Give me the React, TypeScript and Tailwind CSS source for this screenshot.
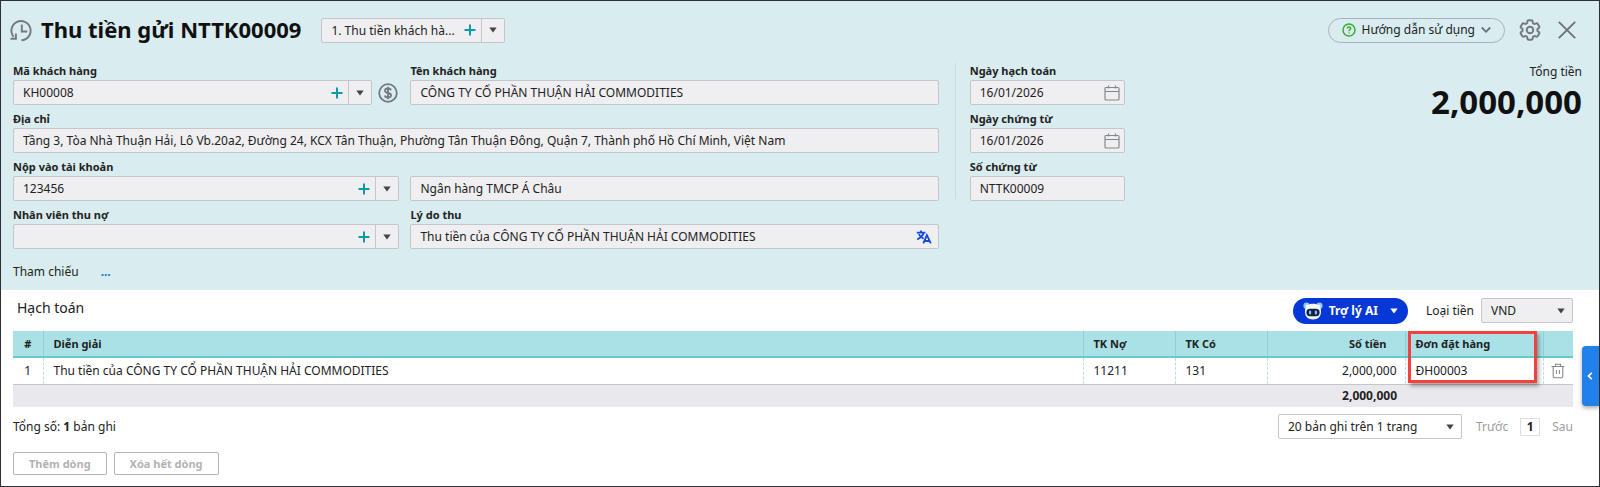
import { useState } from 'react';
import type { ReactNode } from 'react';
import { HiOutlineCog6Tooth } from 'react-icons/hi2';

type FieldProps = {
  id: string;
  label?: string;
  value: string;
  className?: string;
  children?: ReactNode;
};

const CUSTOMER = 'CÔNG TY CỔ PHẦN THUẬN HẢI COMMODITIES';

function Caret({ className = 'text-[#444]' }: { className?: string }) {
  return (
    <svg viewBox="0 0 8 6" className={`w-2 h-1.5 shrink-0 ${className}`} fill="currentColor" aria-hidden="true">
      <path d="M.3.5h7.4L4 5.6z" />
    </svg>
  );
}

function Plus() {
  return (
    <svg viewBox="0 0 12 12" className="w-3 h-3" stroke="#0e9aa8" strokeWidth="2" aria-hidden="true">
      <path d="M6 .5v11M.5 6h11" />
    </svg>
  );
}

function CalendarIcon() {
  return (
    <svg viewBox="0 0 16 16" className="w-4 h-4" fill="none" stroke="#84888e" strokeWidth="1.2" aria-hidden="true">
      <rect x="1" y="2.5" width="14" height="12.5" rx="1" />
      <path d="M1 6.5h14M4.5.5v3M11.5.5v3" />
    </svg>
  );
}

function TranslateIcon() {
  return (
    <svg viewBox="0 0 16 14" className="w-4 h-3.5" fill="none" stroke="#1447e0" strokeWidth="1.8" aria-hidden="true">
      <path d="M.8 2.6h8.600M5 .6v2M7.600 2.800C7 5.600 4.400 8 1.200 9.500M2.800 4.200C3.800 6.200 5.400 7.800 7.600 8.800" />
      <path d="M7.300 13.400l3.600-8.200 3.900 8.200M8.700 11h4.600" />
    </svg>
  );
}

function Field({ id, label, value, className = '', children }: FieldProps) {
  return (
    <div className={`flex flex-col justify-end h-[42px] ${className}`}>
      {label && <label htmlFor={id} className="text-[11px] leading-4 font-bold">{label}</label>}
      <div className="flex items-center h-[25px] mt-px rounded-[2px] border border-[#c3c6cd] bg-[#efeff1]">
        <input id={id} aria-label={label ? undefined : 'Ngân hàng'} defaultValue={value} className="flex-1 min-w-0 h-full pl-[9px] outline-none bg-transparent" />
        {children}
      </div>
    </div>
  );
}

function ComboButtons({ name }: { name: string }) {
  return (
    <>
      <button aria-label={`Thêm ${name}`} className="w-[23px] h-full flex items-center justify-center"><Plus /></button>
      <button aria-label={`Chọn ${name}`} className="w-[23px] h-full flex items-center justify-center border-l border-[#c3c6cd]"><Caret /></button>
    </>
  );
}

function DateButton({ name }: { name: string }) {
  return (
    <button aria-label={`Chọn ${name}`} className="h-full px-1 flex items-center"><CalendarIcon /></button>
  );
}

function RobotIcon() {
  return (
    <svg viewBox="0 0 20 18" className="w-5 h-[18px]" aria-hidden="true">
      <circle cx="3.6" cy="3.8" r="3.2" fill="#8cc8ff" />
      <circle cx="16.4" cy="3.8" r="3.2" fill="#8cc8ff" />
      <circle cx="3.8" cy="4" r="1.5" fill="#eaf5ff" />
      <circle cx="16.2" cy="4" r="1.5" fill="#eaf5ff" />
      <path d="M10 1.8c5 0 8 2.6 8 7.6 0 5.200-3 8-8 8s-8-2.800-8-8c0-5 3-7.600 8-7.600z" fill="#f3f8ff" />
      <rect x="3.4" y="6.8" width="13.2" height="7.4" rx="3.7" fill="#14213f" />
      <rect x="6" y="8.5" width="2.2" height="4" rx="1.1" fill="#7fc4ff" />
      <rect x="11.8" y="8.5" width="2.2" height="4" rx="1.1" fill="#7fc4ff" />
    </svg>
  );
}

function TopBar() {
  return (
    <div className="flex items-center h-[58px] pl-2 pr-[22px]">
      <button aria-label="Lịch sử" className="mr-2">
        <svg viewBox="0 0 24 24" className="w-6 h-6" fill="none" stroke="#75797f" strokeWidth="1.9">
          <path d="M12.5 22.3A9.6 9.6 0 1 0 4.6 18.8" />
          <path d="M12.8 6.5v7h5.5" />
          <path d="M1.5 20.8h5.4v-5.4" />
        </svg>
      </button>
      <h1 className="pb-0.5 text-[22px] leading-8 font-bold text-[#111]">Thu tiền gửi NTTK00009</h1>
      <div className="ml-5 flex items-center w-[184px] h-[25px] rounded-[2px] border border-[#c3c6cd] bg-[#efeff1]">
        <input aria-label="Loại thu tiền" defaultValue="1. Thu tiền khách hà..." className="flex-1 min-w-0 h-full pl-[9px] outline-none bg-transparent" />
        <ComboButtons name="loại thu tiền" />
      </div>
      <div className="ml-auto flex items-center">
        <button className="flex items-center h-[25px] px-[13px] rounded-full border border-[#a9b2ba]">
          <svg viewBox="0 0 14 14" className="w-3.5 h-3.5 mr-1.5" fill="none" stroke="#3bab36" strokeWidth="1.5" aria-hidden="true">
            <circle cx="7" cy="7" r="6" />
            <path d="M5.3 5.6C5.3 3.4 8.7 3.5 8.7 5.5 8.7 6.8 7 6.8 7 8.3M7 9.4v1.200" />
          </svg>
          Hướng dẫn sử dụng
          <svg viewBox="0 0 10 8" className="w-2.5 h-2 ml-1.5" fill="none" stroke="#6b7076" strokeWidth="1.8" aria-hidden="true">
            <path d="M.8 1.5L5 5.8l4.200-4.300" />
          </svg>
        </button>
        <button aria-label="Thiết lập" className="ml-3"><HiOutlineCog6Tooth size={26} color="#75797f" strokeWidth={1.8} /></button>
        <button aria-label="Đóng" className="ml-3.5">
          <svg viewBox="0 0 20 20" className="w-5 h-5" stroke="#6b7076" strokeWidth="1.8">
            <path d="M1.8 1.8l16.400 16.400M18.200 1.800L1.800 18.200" />
          </svg>
        </button>
      </div>
    </div>
  );
}

function VoucherForm() {
  return (
    <div className="flex pl-3 pr-[17px] pt-1">
      <div className="w-[59%] grid grid-cols-[387fr_529fr] gap-x-[11px] gap-y-1.5">
        <div className="flex items-end gap-1.5">
          <Field id="customer-code" label="Mã khách hàng" value="KH00008" className="flex-1">
            <ComboButtons name="khách hàng" />
          </Field>
          <button aria-label="Công nợ" className="mb-0.5 mr-px">
            <svg viewBox="0 0 20 20" className="w-5 h-5" fill="none" stroke="#75797f" strokeWidth="1.8">
              <circle cx="10" cy="10" r="8.8" />
              <path d="M13 7.3c-.3-1.200-1.500-1.800-3-1.800-1.700 0-3 .8-3 2.200 0 3.200 6.100 1.400 6.100 4.600 0 1.400-1.400 2.200-3.100 2.200-1.600 0-2.900-.7-3.100-2M10 3.800v12.400" />
            </svg>
          </button>
        </div>
        <Field id="customer-name" label="Tên khách hàng" value={CUSTOMER} />
        <Field id="address" label="Địa chỉ" className="col-span-2" value="Tầng 3, Tòa Nhà Thuận Hải, Lô Vb.20a2, Đường 24, KCX Tân Thuận, Phường Tân Thuận Đông, Quận 7, Thành phố Hồ Chí Minh, Việt Nam" />
        <Field id="account" label="Nộp vào tài khoản" value="123456">
          <ComboButtons name="tài khoản" />
        </Field>
        <Field id="bank" value="Ngân hàng TMCP Á Châu" />
        <Field id="staff" label="Nhân viên thu nợ" value="">
          <ComboButtons name="nhân viên" />
        </Field>
        <Field id="reason" label="Lý do thu" value={`Thu tiền của ${CUSTOMER}`}>
          <button aria-label="Dịch" className="px-1.5"><TranslateIcon /></button>
        </Field>
      </div>
      <div className="ml-4 h-[136px] w-px bg-[#c9dcdf]" />
      <div className="ml-3.5 w-[155px] shrink-0 flex flex-col gap-1.5">
        <Field id="posting-date" label="Ngày hạch toán" value="16/01/2026">
          <DateButton name="ngày hạch toán" />
        </Field>
        <Field id="voucher-date" label="Ngày chứng từ" value="16/01/2026">
          <DateButton name="ngày chứng từ" />
        </Field>
        <Field id="voucher-no" label="Số chứng từ" value="NTTK00009" />
      </div>
      <div className="ml-auto text-right">
        <div className="leading-[18px]">Tổng tiền</div>
        <div className="text-[33px] leading-[42px] font-bold text-[#111]">2,000,000</div>
      </div>
    </div>
  );
}

function EntryTable() {
  return (
    <div className="relative">
      <table className="w-full table-fixed border-collapse text-left">
        <colgroup>
          <col className="w-[30px]" />
          <col />
          <col className="w-[92px]" />
          <col className="w-[92px]" />
          <col className="w-[138px]" />
          <col className="w-[138px]" />
          <col className="w-[30px]" />
        </colgroup>
        <thead>
          <tr className="h-[26px] bg-[#aae1e6] border-b-2 border-[#62cbd2] text-[11px] *:border-r *:border-r-[#91cfd6]">
            <th className="text-center">#</th>
            <th className="px-2.5">Diễn giải</th>
            <th className="px-2.5">TK Nợ</th>
            <th className="px-2.5">TK Có</th>
            <th className="pr-[18px] text-right">Số tiền</th>
            <th className="px-2.5">Đơn đặt hàng</th>
            <th className="border-r-0!" aria-label="Xóa" />
          </tr>
        </thead>
        <tbody>
          <tr className="h-[27px] border-b border-[#c3c6cd] *:border-r *:border-r-[#b5e0e5] *:border-dashed">
            <td className="text-center">1</td>
            <td className="px-2.5">Thu tiền của {CUSTOMER}</td>
            <td className="px-2.5">11211</td>
            <td className="px-2.5">131</td>
            <td className="px-2 text-right">2,000,000</td>
            <td className="px-2.5">ĐH00003</td>
            <td className="border-r-0!">
              <button aria-label="Xóa dòng" className="flex w-full justify-center">
                <svg viewBox="0 0 14 16" className="w-3.5 h-4" fill="none" stroke="#85898f" strokeWidth="1.1">
                  <path d="M.5 3.5h13M4.500 3.500V1.300h5v2.200M2.200 3.500v9.500c0 1 .6 1.700 1.600 1.700h6.400c1 0 1.600-.7 1.600-1.700V3.500M5.500 7v4M8.500 7v4" />
                </svg>
              </button>
            </td>
          </tr>
        </tbody>
        <tfoot>
          <tr className="h-[23px] bg-[#e8e8ed]">
            <td colSpan={4} />
            <td className="px-2 text-right font-bold">2,000,000</td>
            <td colSpan={2} />
          </tr>
        </tfoot>
      </table>
      {/* highlight over the order column */}
      <div className="absolute top-0 right-9 w-[129px] h-[52px] border-[3px] border-[#f5403c] shadow-[2px_3px_4px_rgba(0,0,0,0.35)] pointer-events-none" />
    </div>
  );
}

function Details() {
  const [pageSize, setPageSize] = useState('20');

  return (
    <div className="pl-3 pr-[26px] pt-2 pb-[11px]">
      <div className="flex items-start h-[33px]">
        <h2 className="pl-1 text-[14px] leading-5">Hạch toán</h2>
        <button className="ml-auto flex items-center h-[26px] px-2.5 rounded-full bg-[#0538d6] text-white font-bold">
          <RobotIcon />
          <span className="ml-1.5 mr-3">Trợ lý AI</span>
          <Caret className="text-white" />
        </button>
        <label htmlFor="currency" className="ml-[18px] mr-[7px] leading-[26px]">Loại tiền</label>
        <div className="relative">
          <select id="currency" className="appearance-none block w-[92px] h-[25px] pl-[9px] rounded-[2px] border border-[#c3c6cd] bg-[#efeff1]">
            <option>VND</option>
          </select>
          <span className="absolute right-2 top-2.5 pointer-events-none"><Caret className="block text-[#444]" /></span>
        </div>
      </div>

      <EntryTable />

      <div className="flex items-center mt-[7px] h-[25px]">
        <span>Tổng số: <b>1</b> bản ghi</span>
        <div className="relative ml-auto">
          <select
            aria-label="Số bản ghi"
            value={pageSize}
            onChange={e => setPageSize(e.target.value)}
            className="appearance-none block w-[184px] h-[25px] pl-[9px] rounded-[2px] border border-[#c3c6cd] bg-white"
          >
            <option value="20">20 bản ghi trên 1 trang</option>
            <option value="50">50 bản ghi trên 1 trang</option>
          </select>
          <span className="absolute right-2 top-2.5 pointer-events-none"><Caret className="block text-[#444]" /></span>
        </div>
        <button className="ml-3.5 text-[#9a9da2]">Trước</button>
        <button className="mx-3 w-5 h-[18px] leading-4 border border-[#dddfe2] font-bold">1</button>
        <button className="text-[#9a9da2]">Sau</button>
      </div>

      <div className="flex gap-[7px] mt-[13px] text-[11px] font-bold text-[#b2b2b2]">
        <button className="h-[23px] px-[15px] rounded-[2px] border border-[#b4b4b4]">Thêm dòng</button>
        <button className="h-[23px] px-[15px] rounded-[2px] border border-[#b4b4b4]">Xóa hết dòng</button>
      </div>
    </div>
  );
}

export default function App() {
  return (
    <div className="relative min-h-screen border border-[#2b2f36] bg-white font-['Noto_Sans',sans-serif] text-[12px] leading-[18px] text-[#222]">
      <div className="bg-[#d9edf0] pb-0.5">
        <TopBar />
        <VoucherForm />
        <div className="flex items-center pl-3 h-8 mt-[7px]">
          <span>Tham chiếu</span>
          <a href="#" className="ml-[22px] font-bold text-[#0b7bc8]">...</a>
        </div>
      </div>
      <Details />
      <button aria-label="Mở bảng bên" className="absolute right-0 top-[345px] w-[17px] h-[60px] flex items-center justify-center rounded-l-[4px] bg-[#2280ea] shadow-[0_2px_4px_rgba(0,0,0,0.35)]">
        <svg viewBox="0 0 6 8" className="w-1.5 h-2 mr-0.5" fill="none" stroke="white" strokeWidth="1.7">
          <path d="M4.8.8L1.5 4l3.300 3.200" />
        </svg>
      </button>
    </div>
  );
}
